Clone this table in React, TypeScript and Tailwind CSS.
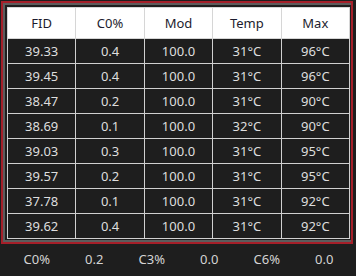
import React from "react";

const rows = [
  ["39.33", "0.4", "100.0", "31°C", "96°C"],
  ["39.45", "0.4", "100.0", "31°C", "96°C"],
  ["38.47", "0.2", "100.0", "31°C", "90°C"],
  ["38.69", "0.1", "100.0", "32°C", "90°C"],
  ["39.03", "0.3", "100.0", "31°C", "95°C"],
  ["39.57", "0.2", "100.0", "31°C", "95°C"],
  ["37.78", "0.1", "100.0", "31°C", "92°C"],
  ["39.62", "0.4", "100.0", "31°C", "92°C"],
];

const headers = ["FID", "C0%", "Mod", "Temp", "Max"];
const footer = ["C0%", "0.2", "C3%", "0.0", "C6%", "0.0"];

export default function App() {
  return (
    <div
      className="w-[356px] h-[276px] bg-[#1e1e1e] pt-[1px] pl-[1px] pr-[3px] flex flex-col"
      style={{ fontFamily: '"Noto Sans", "Open Sans", sans-serif' }}
    >
      <div className="border-2 border-[#a51f29]">
        <div className="border-2 border-[#5c5c5c] border-r-0 pl-[2px] pt-[2px] pr-[1px] pb-[1px] bg-[#1e1e1e]">
          <table className="w-full table-fixed border-collapse text-[13px] leading-none">
            <thead>
              <tr className="h-[31px] bg-white">
                {headers.map((h) => (
                  <th
                    key={h}
                    className="border border-[#d6d6d6] font-normal text-[#1c1c2e] text-center"
                  >
                    {h}
                  </th>
                ))}
              </tr>
            </thead>
            <tbody>
              {rows.map((r, i) => (
                <tr key={i} className="h-[25px]">
                  {r.map((c, j) => (
                    <td
                      key={j}
                      className="border border-[#d0d0d0] text-center text-[#dedede]"
                    >
                      {c}
                    </td>
                  ))}
                </tr>
              ))}
            </tbody>
          </table>
        </div>
      </div>
      <div className="flex-1 grid grid-cols-6 items-center pl-[7px] pr-0 text-[13px] text-[#d4d4d4]">
        {footer.map((f, i) => (
          <div key={i} className="text-center">
            {f}
          </div>
        ))}
      </div>
    </div>
  );
}
